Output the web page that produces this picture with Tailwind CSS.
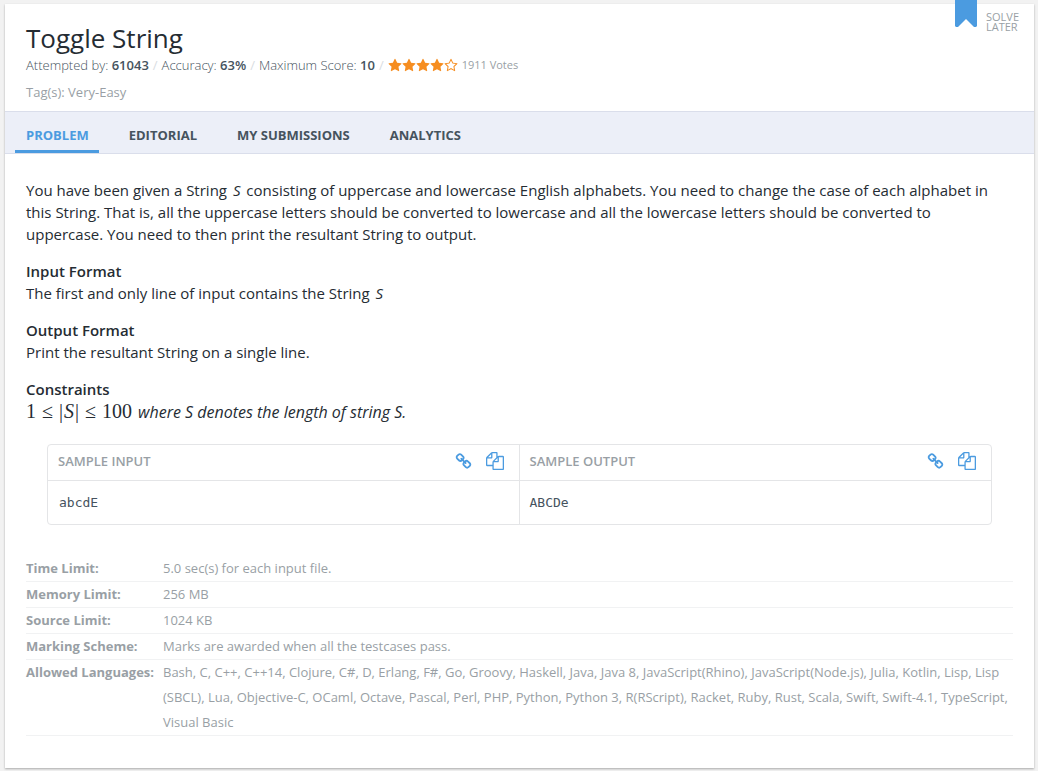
<!DOCTYPE html>
<html lang="en">
<head>
<meta charset="utf-8">
<meta name="viewport" content="width=device-width, initial-scale=1">
<title>Toggle String</title>
<script src="https://cdn.jsdelivr.net/npm/@tailwindcss/browser@4"></script>
</head>
<body class="min-h-screen bg-[#f2f2f2] pt-1 pr-1 pb-[3px] pl-[5px] font-['Open_Sans',sans-serif] text-[#252c33]">
<svg class="hidden" aria-hidden="true">
  <symbol id="star" viewBox="0 0 1792 1792"><path d="M1728 647q0 22-26 48l-363 354 86 500q1 7 1 20 0 21-10.5 35.5t-30.5 14.5q-19 0-40-12l-449-236-449 236q-22 12-40 12-21 0-31.5-14.5t-10.5-35.5q0-6 2-20l86-500-364-354q-25-27-25-48 0-37 56-46l502-73 225-455q19-41 49-41t49 41l225 455 502 73q56 9 56 46z"/></symbol>
  <symbol id="star-empty" viewBox="0 0 1792 1792"><path d="M1201 1004l306-297-422-62-189-382-189 382-422 62 306 297-73 421 378-199 377 199zm527-357q0 22-26 48l-363 354 86 500q1 7 1 20 0 50-41 50-19 0-40-12l-449-236-449 236q-22 12-40 12-21 0-31.5-14.5t-10.5-35.5q0-6 2-20l86-500-364-354q-25-27-25-48 0-37 56-46l502-73 225-455q19-41 49-41t49 41l225 455 502 73q56 9 56 46z"/></symbol>
  <symbol id="link" viewBox="0 0 1792 1792"><path d="M1520 1216q0-40-28-68l-208-208q-28-28-68-28-42 0-72 32 3 3 19 18.5t21.5 21.5 15 19 13 25.5 3.5 27.5q0 40-28 68t-68 28q-15 0-27.5-3.5t-25.5-13-19-15-21.5-21.5-18.5-19q-33 31-33 73 0 40 28 68l206 207q27 27 68 27 40 0 68-26l147-146q28-28 28-67zm-703-705q0-40-28-68l-206-207q-28-28-68-28-39 0-68 27l-147 146q-28 28-28 67 0 40 28 68l208 208q27 27 68 27 42 0 72-31-3-3-19-18.5t-21.5-21.5-15-19-13-25.5-3.5-27.5q0-40 28-68t68-28q15 0 27.5 3.5t25.5 13 19 15 21.5 21.5 18.5 19q33-31 33-73zm895 705q0 120-85 203l-147 146q-83 83-203 83-121 0-204-85l-206-207q-83-83-83-203 0-123 88-209l-88-88q-86 88-208 88-120 0-204-84l-208-208q-84-84-84-204t85-203l147-146q83-83 203-83 121 0 204 85l206 207q83 83 83 203 0 123-88 209l88 88q86-88 208-88 120 0 204 84l208 208q84 84 84 204z"/></symbol>
  <symbol id="copy" viewBox="0 0 1792 1792"><path d="M1696 384q40 0 68 28t28 68v1216q0 40-28 68t-68 28h-960q-40 0-68-28t-28-68v-288h-544q-40 0-68-28t-28-68v-672q0-40 20-88t48-76l408-408q28-28 76-48t88-20h416q40 0 68 28t28 68v328q68-40 128-40h416zm-544 213l-299 299h299v-299zm-640-384l-299 299h299v-299zm196 647l316-316v-416h-384v416q0 40-28 68t-68 28h-416v640h512v-256q0-40 20-88t48-76zm956 804v-1152h-384v416q0 40-28 68t-68 28h-416v640h896z"/></symbol>
</svg>
<main class="relative bg-white pb-8 shadow-[0_1px_2px_rgba(0,0,0,0.3)]">
  <header class="px-[21px] pt-4 pb-[10px]">
    <h1 class="text-[26px] leading-9">Toggle String</h1>
    <div class="flex h-[18px] items-center text-[13px] leading-[18px] text-[#46535e]">
      <span class="font-light">Attempted by: <b class="font-semibold">61043</b></span>
      <span class="px-1 text-[#d9dde2]">/</span>
      <span class="font-light">Accuracy: <b class="font-semibold">63%</b></span>
      <span class="px-1 text-[#d9dde2]">/</span>
      <span class="font-light">Maximum Score: <b class="font-semibold">10</b></span>
      <span class="px-1 text-[#d9dde2]">/</span>
      <span class="flex text-[#f68d20]" role="img" aria-label="4 of 5 stars">
        <svg class="h-[15px] w-[14px] fill-current"><use href="#star"/></svg>
        <svg class="h-[15px] w-[14px] fill-current"><use href="#star"/></svg>
        <svg class="h-[15px] w-[14px] fill-current"><use href="#star"/></svg>
        <svg class="h-[15px] w-[14px] fill-current"><use href="#star"/></svg>
        <svg class="h-[15px] w-[14px] fill-current"><use href="#star-empty"/></svg>
      </span>
      <span class="pl-1 text-[11px] text-[#999fa5]">1911 Votes</span>
    </div>
    <p class="mt-[9px] text-[13px] leading-[18px] text-[#999fa5]">Tag(s): <a href="#">Very-Easy</a></p>
  </header>
  <button type="button" class="absolute -top-1 right-[15px] flex items-start gap-[9px] text-left text-[11px] leading-[10px] font-medium text-[#999fa5]">
    <svg class="h-[27px] w-[22px] fill-[#4b9be0]" viewBox="0 0 22 27"><path d="M0 0h22v26l-1 1h-2l-8-8-8 8H1l-1-1z"/></svg>
    <span class="pt-3">SOLVE<br>LATER</span>
  </button>
  <nav class="flex gap-5 border-y border-[#dadeeb] bg-[#eceff8] px-[10px] text-[13px] font-bold text-[#46535e]">
    <a href="#" class="h-[41px] border-b-3 border-[#4b9be0] pr-[10px] pl-[11px] leading-[46px] text-[#4b9be0]">PROBLEM</a>
    <a href="#" class="h-[41px] px-[10px] leading-[46px]">EDITORIAL</a>
    <a href="#" class="h-[41px] px-[10px] leading-[46px]">MY SUBMISSIONS</a>
    <a href="#" class="h-[41px] px-[10px] leading-[46px]">ANALYTICS</a>
  </nav>
  <article class="px-[21px] pt-[25px] text-[15px] leading-[22px]">
    <p class="pr-[10px]">You have been given a String <i class="px-[2px]">S</i> consisting of uppercase and lowercase English alphabets. You need to change the case of each alphabet in this String. That is, all the uppercase letters should be converted to lowercase and all the lowercase letters should be converted to uppercase. You need to then print the resultant String to output.</p>
    <h2 class="mt-[15px] font-semibold">Input Format</h2>
    <p>The first and only line of input contains the String <i class="px-[2px]">S</i></p>
    <h2 class="mt-[15px] font-semibold">Output Format</h2>
    <p>Print the resultant String on a single line.</p>
    <h2 class="mt-[15px] font-semibold">Constraints</h2>
    <p class="flex h-[22px] items-baseline gap-[6px]"><span class="flex gap-[6px] font-['Liberation_Serif',serif] text-[20px]"><span>1</span><span>≤</span><span class="flex gap-px"><span>|</span><i>S</i><span>|</span></span><span>≤</span><span>100</span></span> <i class="text-[16px]">where S denotes the length of string S.</i></p>
    <table class="mx-[21px] mt-[22px] w-[calc(100%-42px)] table-fixed border-separate border-spacing-0 rounded-sm border border-[#e4e5e7] text-left text-[13px]">
      <thead class="text-[#999fa5]">
        <tr>
          <th scope="col" class="h-9 border-r border-b border-[#e4e5e7] pt-0 pr-[15px] pb-[3px] pl-[10px] font-semibold">
            <div class="flex items-center">
              <span class="flex-1">SAMPLE INPUT</span>
              <button type="button" aria-label="Link to sample input" class="mr-[14px] text-[#4b9be0]"><svg class="size-[17px] fill-current"><use href="#link"/></svg></button>
              <button type="button" aria-label="Copy sample input" class="text-[#4b9be0]"><svg class="size-[18px] fill-current"><use href="#copy"/></svg></button>
            </div>
          </th>
          <th scope="col" class="h-9 border-b border-[#e4e5e7] pt-0 pr-[15px] pb-[3px] pl-[10px] font-semibold">
            <div class="flex items-center">
              <span class="flex-1">SAMPLE OUTPUT</span>
              <button type="button" aria-label="Link to sample output" class="mr-[14px] text-[#4b9be0]"><svg class="size-[17px] fill-current"><use href="#link"/></svg></button>
              <button type="button" aria-label="Copy sample output" class="text-[#4b9be0]"><svg class="size-[18px] fill-current"><use href="#copy"/></svg></button>
            </div>
          </th>
        </tr>
      </thead>
      <tbody class="font-['DejaVu_Sans_Mono',monospace] text-[#46535e]">
        <tr>
          <td class="h-[43px] border-r border-[#e4e5e7] px-[11px]">abcdE</td>
          <td class="h-[43px] px-[10px]">ABCDe</td>
        </tr>
      </tbody>
    </table>
  </article>
  <dl class="mx-[21px] mt-[31px] text-[13px] leading-[25px] text-[#999fa5]">
    <div class="flex border-b border-[#f1f2f3]"><dt class="w-[137px] shrink-0 font-bold">Time Limit:</dt><dd>5.0 sec(s) for each input file.</dd></div>
    <div class="flex border-b border-[#f1f2f3]"><dt class="w-[137px] shrink-0 font-bold">Memory Limit:</dt><dd>256 MB</dd></div>
    <div class="flex border-b border-[#f1f2f3]"><dt class="w-[137px] shrink-0 font-bold">Source Limit:</dt><dd>1024 KB</dd></div>
    <div class="flex border-b border-[#f1f2f3]"><dt class="w-[137px] shrink-0 font-bold">Marking Scheme:</dt><dd>Marks are awarded when all the testcases pass.</dd></div>
    <div class="flex border-b border-[#f1f2f3]"><dt class="w-[137px] shrink-0 font-bold">Allowed Languages:</dt><dd>Bash, C, C++, C++14, Clojure, C#, D, Erlang, F#, Go, Groovy, Haskell, Java, Java 8, JavaScript(Rhino), JavaScript(Node.js), Julia, Kotlin, Lisp, Lisp (SBCL), Lua, Objective-C, OCaml, Octave, Pascal, Perl, PHP, Python, Python 3, R(RScript), Racket, Ruby, Rust, Scala, Swift, Swift-4.1, TypeScript, Visual Basic</dd></div>
  </dl>
</main>
</body>
</html>
